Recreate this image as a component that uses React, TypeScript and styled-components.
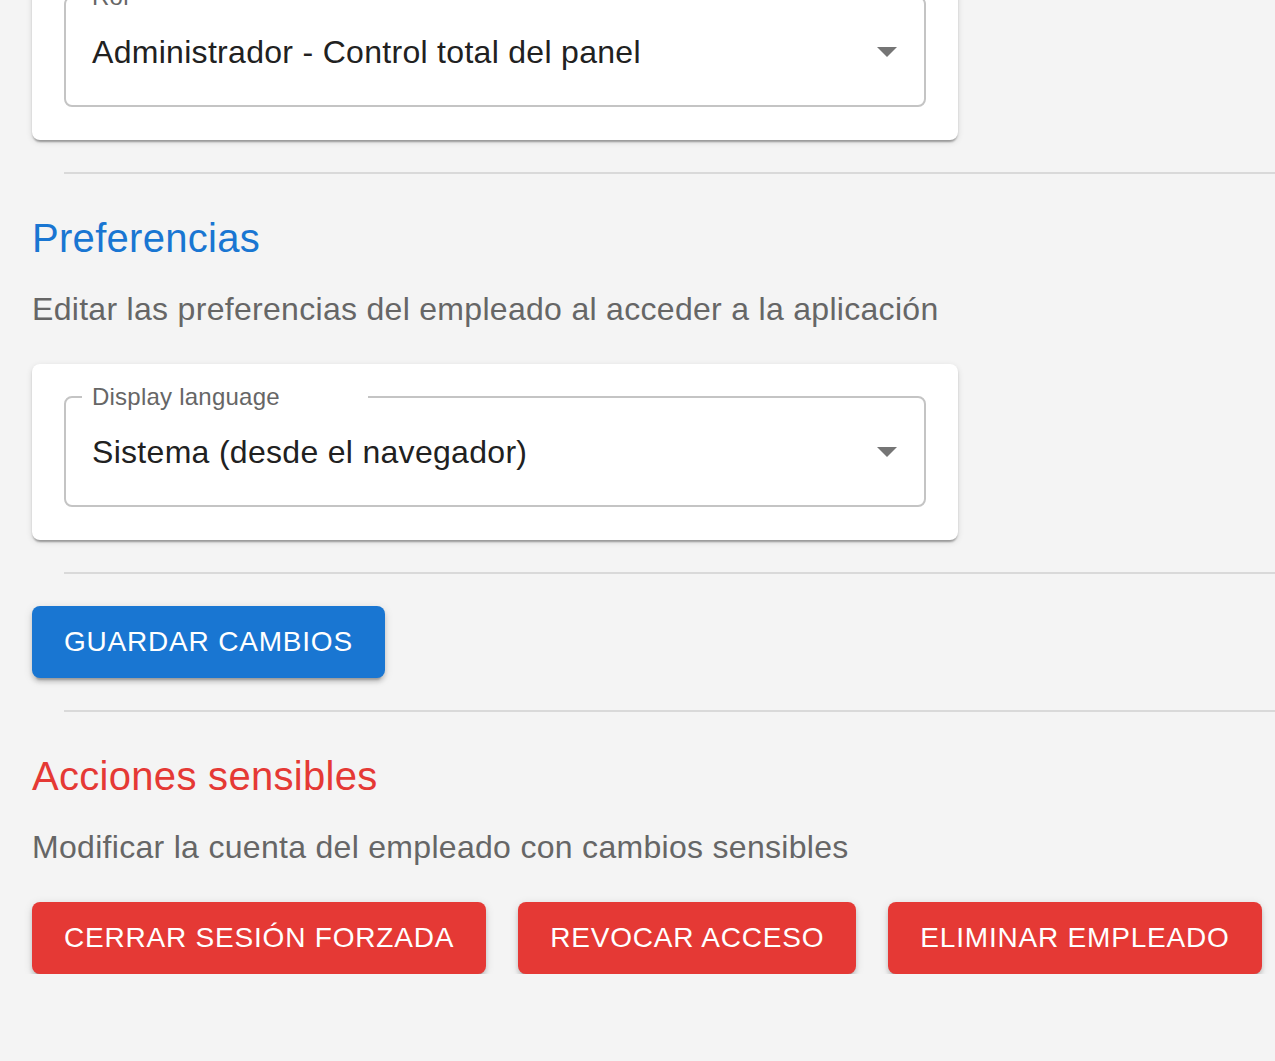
import React from "react";
import styled, { createGlobalStyle } from "styled-components";

const GlobalStyle = createGlobalStyle`
  html, body {
    margin: 0;
    padding: 0;
    background: #f4f4f4;
    font-family: "Liberation Sans", Arial, sans-serif;
    overflow: hidden;
  }
`;

const Page = styled.div`
  display: flex;
  flex-direction: column;
  align-items: flex-start;
  padding-left: 32px;
  margin-top: -36px;
`;

const Card = styled.div`
  width: 926px;
  box-sizing: border-box;
  padding: 21px 32px 33px;
  background: #fff;
  border-radius: 8px;
  box-shadow: 0 4px 2px -2px rgba(0, 0, 0, 0.2), 0 2px 2px 0 rgba(0, 0, 0, 0.14),
    0 2px 6px 0 rgba(0, 0, 0, 0.12);
`;

const Field = styled.fieldset`
  margin: 0;
  padding: 0 0 10px 16px;
  height: 122px;
  box-sizing: border-box;
  border: 2px solid #c4c4c4;
  border-radius: 8px;
  display: flex;
  align-items: center;
  min-width: 0;
`;

const Legend = styled.legend<{ $notch: number }>`
  width: ${(p) => p.$notch}px;
  box-sizing: border-box;
  padding: 0 0 0 10px;
  font-size: 24px;
  line-height: 24px;
  letter-spacing: 0.23px;
  color: #666;
`;

const SelectValue = styled.div`
  flex: 1;
  padding-left: 10px;
  font-size: 32px;
  letter-spacing: 0.3px;
  color: #212121;
  line-height: 1.4;
`;

const Arrow = styled.svg`
  flex: none;
  width: 20px;
  height: 10px;
  margin-right: 27px;
  fill: #757575;
`;

const Divider = styled.hr`
  align-self: stretch;
  margin: 32px 0 32px 32px;
  border: none;
  height: 2px;
  background: #d9d9d9;
`;

const Title = styled.h2<{ $tone: "primary" | "danger" }>`
  margin: 0;
  font-size: 40px;
  line-height: 64px;
  font-weight: 400;
  letter-spacing: 0.3px;
  color: ${(p) => (p.$tone === "danger" ? "#e53935" : "#1976d2")};
`;

const Description = styled.p`
  margin: 16px 0 32px;
  font-size: 32px;
  line-height: 46px;
  letter-spacing: 0.3px;
  color: #666;
`;

const Row = styled.div`
  display: flex;
  gap: 32px;
`;

const Button = styled.button<{ $tone: "primary" | "danger" }>`
  height: 72px;
  padding: 0 32px;
  border: none;
  border-radius: 8px;
  background: ${(p) => (p.$tone === "danger" ? "#e53935" : "#1976d2")};
  color: #fff;
  font-family: "Liberation Sans", Arial, sans-serif;
  font-size: 28px;
  letter-spacing: 0.8px;
  text-transform: uppercase;
  box-shadow: 0 6px 2px -4px rgba(0, 0, 0, 0.2), 0 4px 4px 0 rgba(0, 0, 0, 0.14),
    0 2px 10px 0 rgba(0, 0, 0, 0.12);
  cursor: pointer;
`;

const Caret = () => (
  <Arrow viewBox="0 0 20 10">
    <path d="M0 0 L20 0 L10 10 Z" />
  </Arrow>
);

const SelectField = ({ label, value, notch }: { label: string; value: string; notch: number }) => (
  <Field>
    <Legend $notch={notch}>{label}</Legend>
    <SelectValue>{value}</SelectValue>
    <Caret />
  </Field>
);

export default function App() {
  return (
    <>
      <GlobalStyle />
      <Page>
        <Card>
          <SelectField label="Rol" value="Administrador - Control total del panel" notch={68} />
        </Card>
        <Divider />
        <Title $tone="primary">Preferencias</Title>
        <Description>Editar las preferencias del empleado al acceder a la aplicación</Description>
        <Card>
          <SelectField label="Display language" value="Sistema (desde el navegador)" notch={286} />
        </Card>
        <Divider />
        <Button $tone="primary">Guardar cambios</Button>
        <Divider />
        <Title $tone="danger">Acciones sensibles</Title>
        <Description>Modificar la cuenta del empleado con cambios sensibles</Description>
        <Row>
          <Button $tone="danger">Cerrar sesión forzada</Button>
          <Button $tone="danger">Revocar acceso</Button>
          <Button $tone="danger">Eliminar empleado</Button>
        </Row>
      </Page>
    </>
  );
}
